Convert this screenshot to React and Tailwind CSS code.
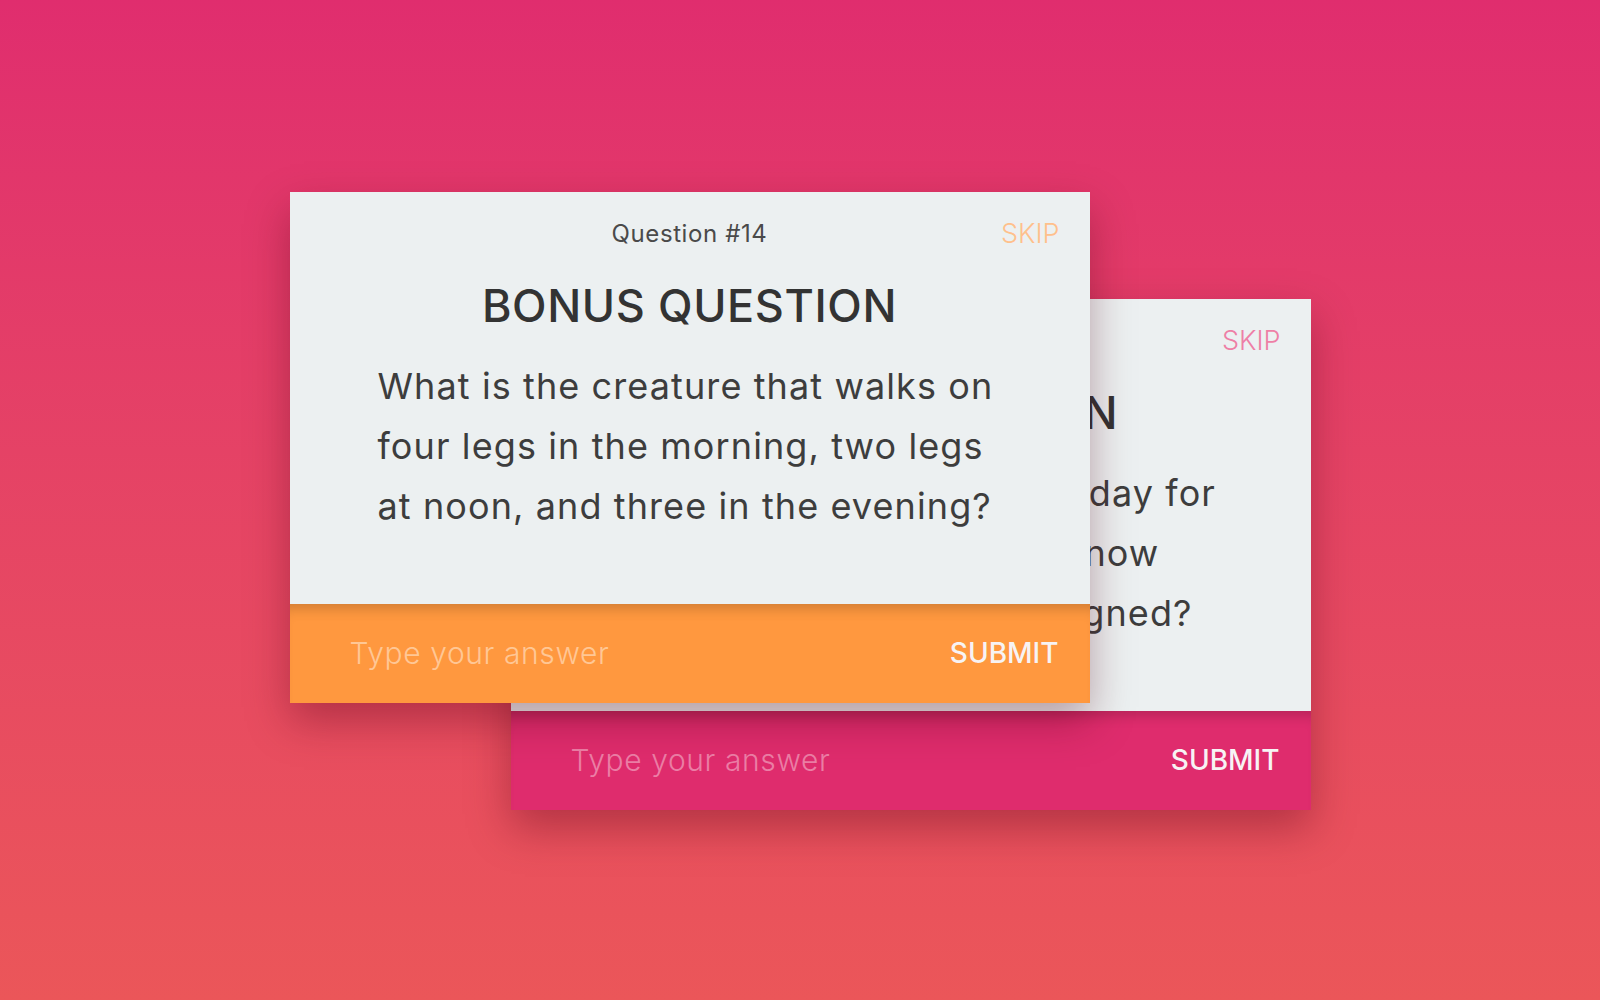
import React from 'react'

function QuestionCard({ number, skipColor, footerBg, placeholderColor, lines, className }) {
    return (
        <div className={`w-[800px] shadow-[0_18px_40px_rgba(80,0,20,0.35)] ${className}`}>
            {/* Card body */}
            <div className="h-[412px] bg-[#ecf0f1] px-[30px] pt-[22px]">
                <div className="grid h-[40px] grid-cols-[1fr_auto_1fr] items-center">
                    <span />
                    <span className="text-[24px] tracking-[0.6px] text-[#4a4a4a]">{number}</span>
                    <span className={`justify-self-end text-[27px] font-light ${skipColor}`}>SKIP</span>
                </div>
                <h2 className="mt-[22px] text-center text-[45px] font-medium leading-[60px] tracking-[0.6px] text-[#333333]">
                    BONUS QUESTION
                </h2>
                <p className="mx-auto mt-[20px] w-[624px] text-[36px] leading-[60px] tracking-[1.1px] text-[#3d3d3d]">
                    {lines.map((line, i) => (
                        <span key={i} className="block whitespace-nowrap">{line}</span>
                    ))}
                </p>
            </div>

            {/* Answer bar */}
            <div className={`flex h-[99px] items-center justify-between pl-[60px] pr-[31px] shadow-[inset_0_14px_14px_-10px_rgba(0,0,0,0.2)] ${footerBg}`}>
                <span className={`text-[30px] font-light tracking-[0.6px] ${placeholderColor}`}>Type your answer</span>
                <span className="text-[28px] font-medium text-[#f7f3f4]">SUBMIT</span>
            </div>
        </div>
    )
}

export default function App() {
    return (
        <div
            className="flex h-[1000px] w-full items-center justify-center bg-gradient-to-b from-[#e02d6e] to-[#eb5659]"
            style={{ fontFamily: 'Inter, "Noto Sans", sans-serif' }}
        >
            <div className="relative h-[617px] w-[1021px]">
                {/* Back card */}
                <QuestionCard
                    className="absolute left-[221px] top-[107px]"
                    number="Question #15"
                    skipColor="text-[#ee7fa6]"
                    footerBg="bg-[#df2c6d]"
                    placeholderColor="text-[#ec7ea6]"
                    lines={[
                        'Who coined the word Saturday for',
                        'the weekend, and do you know',
                        'how the weekday was designed?',
                    ]}
                />
                {/* Front card */}
                <QuestionCard
                    className="absolute left-0 top-0"
                    number="Question #14"
                    skipColor="text-[#ffc08c]"
                    footerBg="bg-[#ff983f]"
                    placeholderColor="text-[#ffc795]"
                    lines={[
                        'What is the creature that walks on',
                        'four legs in the morning, two legs',
                        'at noon, and three in the evening?',
                    ]}
                />
            </div>
        </div>
    )
}
